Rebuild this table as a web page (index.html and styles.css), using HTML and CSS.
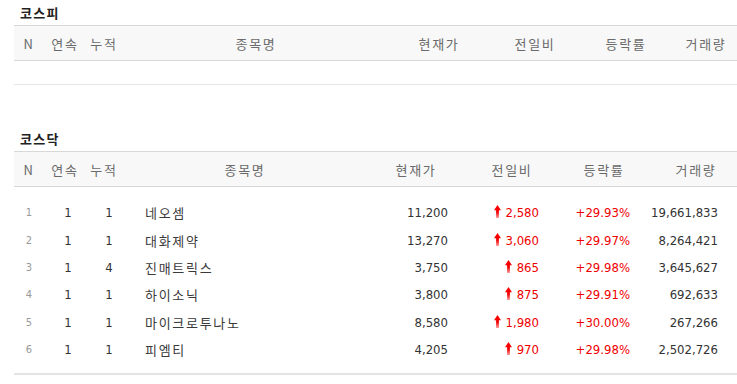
FILE: index.html
```html
<!DOCTYPE html>
<html lang="ko">
<head>
<meta charset="utf-8">
<title>코스피 / 코스닥</title>
<link rel="stylesheet" href="styles.css">
</head>
<body>
<div class="page">
  <section class="market market-kospi">
    <h2 class="market-title">코스피</h2>
    <div class="row head">
      <span class="h">N</span><span class="h">연속</span><span class="h">누적</span><span class="h">종목명</span><span class="h">현재가</span><span class="h">전일비</span><span class="h">등락률</span><span class="h h-last">거래량</span>
    </div>
    <div class="empty-row"></div>
  </section>

  <section class="market market-kosdaq">
    <h2 class="market-title">코스닥</h2>
    <div class="row head">
      <span class="h">N</span><span class="h">연속</span><span class="h">누적</span><span class="h">종목명</span><span class="h">현재가</span><span class="h">전일비</span><span class="h">등락률</span><span class="h h-last">거래량</span>
    </div>
    <div class="body">
      <div class="row item"><span class="c-n">1</span><span class="c-s">1</span><span class="c-t">1</span><span class="c-name">네오셈</span><span class="c-price">11,200</span><span class="c-chg"><svg class="up" viewBox="0 0 7 13"><use href="#arrow"/></svg>2,580</span><span class="c-rate">+29.93%</span><span class="c-vol">19,661,833</span></div>
      <div class="row item"><span class="c-n">2</span><span class="c-s">1</span><span class="c-t">1</span><span class="c-name">대화제약</span><span class="c-price">13,270</span><span class="c-chg"><svg class="up" viewBox="0 0 7 13"><use href="#arrow"/></svg>3,060</span><span class="c-rate">+29.97%</span><span class="c-vol">8,264,421</span></div>
      <div class="row item"><span class="c-n">3</span><span class="c-s">1</span><span class="c-t">4</span><span class="c-name">진매트릭스</span><span class="c-price">3,750</span><span class="c-chg"><svg class="up" viewBox="0 0 7 13"><use href="#arrow"/></svg>865</span><span class="c-rate">+29.98%</span><span class="c-vol">3,645,627</span></div>
      <div class="row item"><span class="c-n">4</span><span class="c-s">1</span><span class="c-t">1</span><span class="c-name">하이소닉</span><span class="c-price">3,800</span><span class="c-chg"><svg class="up" viewBox="0 0 7 13"><use href="#arrow"/></svg>875</span><span class="c-rate">+29.91%</span><span class="c-vol">692,633</span></div>
      <div class="row item"><span class="c-n">5</span><span class="c-s">1</span><span class="c-t">1</span><span class="c-name">마이크로투나노</span><span class="c-price">8,580</span><span class="c-chg"><svg class="up" viewBox="0 0 7 13"><use href="#arrow"/></svg>1,980</span><span class="c-rate">+30.00%</span><span class="c-vol">267,266</span></div>
      <div class="row item"><span class="c-n">6</span><span class="c-s">1</span><span class="c-t">1</span><span class="c-name">피엠티</span><span class="c-price">4,205</span><span class="c-chg"><svg class="up" viewBox="0 0 7 13"><use href="#arrow"/></svg>970</span><span class="c-rate">+29.98%</span><span class="c-vol">2,502,726</span></div>
    </div>
  </section>
</div>
<svg class="defs" width="0" height="0" aria-hidden="true">
  <defs>
    <linearGradient id="arrowGrad" x1="0" y1="0" x2="0" y2="1">
      <stop offset="0" stop-color="#ff0000"/>
      <stop offset="0.55" stop-color="#f00000"/>
      <stop offset="1" stop-color="#ff9c9c"/>
    </linearGradient>
    <symbol id="arrow" viewBox="0 0 7 13">
      <path d="M3.5 0 L7 5.2 H4.9 V13 H2.1 V5.2 H0 Z" fill="url(#arrowGrad)"/>
    </symbol>
  </defs>
</svg>
</body>
</html>
```

FILE: styles.css
```css
html, body {
  margin: 0;
  padding: 0;
  background: #fff;
}

.page {
  padding-left: 14px;
  font-family: "Noto Sans CJK KR", "Noto Sans", sans-serif;
  color: #333;
}

.defs {
  position: absolute;
  width: 0;
  height: 0;
}

.market-title {
  margin: 0;
  height: 25px;
  line-height: 25px;
  padding-left: 6px;
  font-size: 13px;
  font-weight: 700;
  letter-spacing: 1.3px;
  color: #222;
}

.market-kosdaq {
  margin-top: 41px;
}

.row {
  display: grid;
  align-items: center;
}

.market-kospi .row {
  grid-template-columns: 30px 42px 36px 268px 98px 94px 88px 1fr;
}

.market-kosdaq .row {
  grid-template-columns: 30px 42px 36px 246px 96px 96px 88px 1fr;
}

.head {
  height: 34px;
  background: #f8f8f8;
  border-top: 1px solid #d8d8d8;
  border-bottom: 1px solid #d8d8d8;
}

.h {
  text-align: center;
  font-size: 13px;
  letter-spacing: 1.7px;
  color: #6a6a6a;
  white-space: nowrap;
}

.market-kospi .h-last {
  padding-left: 5px;
}

.market-kosdaq .h-last {
  padding-left: 7px;
}

.empty-row {
  height: 23px;
  border-bottom: 1px solid #e6e6e6;
}

.body {
  padding-top: 12px;
  padding-bottom: 10px;
  border-bottom: 2px solid #e3e3e3;
}

.item {
  height: 27.4px;
  font-family: "DejaVu Sans Condensed", "DejaVu Sans", sans-serif;
  font-size: 13px;
  white-space: nowrap;
}

.c-n {
  text-align: center;
  font-size: 11px;
  color: #999;
}

.c-s {
  text-align: center;
  padding-left: 6px;
}

.c-t {
  text-align: center;
  padding-left: 10px;
}

.c-name {
  padding-left: 23px;
  font-family: "Noto Sans CJK KR", "Noto Sans", sans-serif;
  font-size: 13px;
  letter-spacing: 1.7px;
  color: #3a3a3a;
}

.c-price {
  text-align: right;
  padding-right: 16px;
}

.c-chg {
  display: flex;
  justify-content: flex-end;
  align-items: center;
  gap: 5px;
  padding-right: 21px;
  color: #ee0000;
}

.up {
  width: 7px;
  height: 13px;
  flex: none;
  margin-top: -2px;
}

.c-rate {
  text-align: right;
  padding-right: 18px;
  color: #ee0000;
}

.c-vol {
  text-align: right;
  padding-right: 19px;
}
```
